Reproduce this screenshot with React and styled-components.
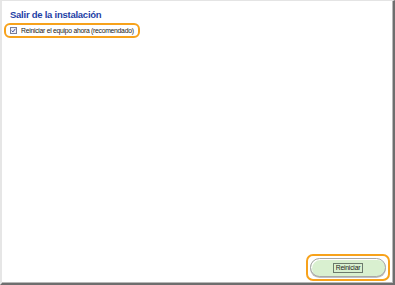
import React, { useState } from "react";
import styled, { createGlobalStyle } from "styled-components";

const GlobalStyle = createGlobalStyle`
  html, body {
    margin: 0;
    padding: 0;
    background: #ffffff;
  }
`;

const Frame = styled.div`
  box-sizing: border-box;
  width: 395px;
  height: 285px;
  display: flex;
  flex-direction: column;
  background: #ffffff;
  border-top: 1px solid #e4e4e4;
  border-left: 2px solid #e6e6e6;
  border-right: 2px solid #6e6e6e;
  border-bottom: 2px solid #6e6e6e;
  box-shadow: inset 0 -1px 0 #b8b8b8, inset -1px 0 0 #b8b8b8;
  font-family: "Liberation Sans", Arial, sans-serif;
`;

const Content = styled.div`
  flex: 1;
  display: flex;
  flex-direction: column;
  align-items: flex-start;
  padding: 7px 0 0 2px;
`;

const Title = styled.h1`
  margin: 0 0 2px 6px;
  font-size: 9.5px;
  font-weight: bold;
  letter-spacing: -0.25px;
  color: #1e3fa6;
  line-height: 13px;
`;

const Highlight = styled.div`
  display: flex;
  align-items: center;
  padding: ${(p) => p.$pad};
  border: 2px solid #f7a21b;
  border-radius: ${(p) => p.$radius};
`;

const CheckRow = styled.label`
  display: flex;
  align-items: center;
  gap: 4px;
  font-size: 6.8px;
  letter-spacing: -0.27px;
  color: #222;
  cursor: pointer;
`;

const Box = styled.span`
  box-sizing: border-box;
  width: 7px;
  height: 7px;
  border: 1px solid #7a7f99;
  background: #eef0fa;
  display: flex;
  align-items: center;
  justify-content: center;
`;

const Footer = styled.div`
  display: flex;
  justify-content: flex-end;
  padding: 0 3px 2px 0;
`;

const PillButton = styled.button`
  box-sizing: border-box;
  width: 76px;
  height: 19px;
  border-radius: 10px;
  border: 1px solid #a8a8a8;
  background: #d9f0d0;
  box-shadow: inset 1px 1px 0 #ffffff, 0 1px 0 #c0c0c0;
  display: flex;
  align-items: center;
  justify-content: center;
  padding: 0;
  cursor: pointer;
`;

const ButtonLabel = styled.span`
  font-family: "Liberation Sans", Arial, sans-serif;
  font-size: 6.8px;
  letter-spacing: -0.2px;
  color: #222;
  border: 1px solid #6c7a6c;
  padding: 0 2px;
  line-height: 8px;
`;

export default function App() {
  const [checked, setChecked] = useState(true);
  return (
    <>
      <GlobalStyle />
      <Frame>
        <Content>
          <Title>Salir de la instalación</Title>
          <Highlight $pad="2px 4px 2px 4px" $radius="6px">
            <CheckRow onClick={() => setChecked(!checked)}>
              <Box>
                {checked && (
                  <svg width="5" height="5" viewBox="0 0 5 5">
                    <path d="M0.6 2.6 L1.9 3.9 L4.4 0.8" fill="none" stroke="#3b4a9a" strokeWidth="1" />
                  </svg>
                )}
              </Box>
              Reiniciar el equipo ahora (recomendado)
            </CheckRow>
          </Highlight>
        </Content>
        <Footer>
          <Highlight $pad="2px" $radius="7px">
            <PillButton>
              <ButtonLabel>Reiniciar</ButtonLabel>
            </PillButton>
          </Highlight>
        </Footer>
      </Frame>
    </>
  );
}
